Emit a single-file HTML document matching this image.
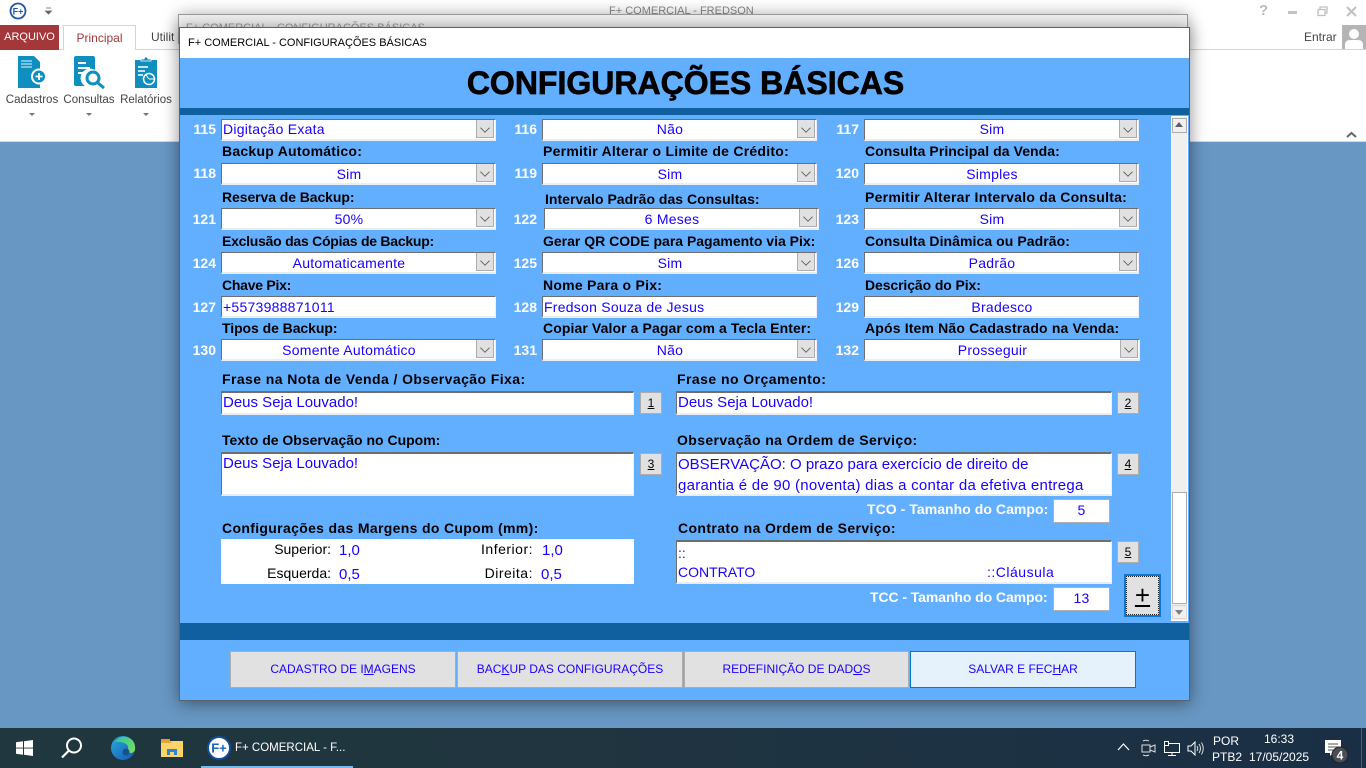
<!DOCTYPE html>
<html lang="pt-BR"><head><meta charset="utf-8"><title>F+ COMERCIAL</title>
<style>
html,body{margin:0;padding:0;width:1366px;height:768px;overflow:hidden;background:#fff;font-family:"Liberation Sans",sans-serif}
div,span,svg{position:absolute;box-sizing:border-box}
u{position:static}
.t{white-space:nowrap;line-height:16px}
.l{font-weight:bold;font-size:14px;letter-spacing:.25px;color:#000}
.w{font-weight:bold;font-size:14px;letter-spacing:.05px;color:#fff}
.h{letter-spacing:.35px}
.n{font-weight:bold;font-size:14px;color:#fff;text-align:right;width:30px;height:16px}
.f{background:#fff;color:#1a00ff;font-size:14px;letter-spacing:.25px;line-height:20px;white-space:nowrap;overflow:hidden;border-top:1px solid #6e6e6e;border-left:1px solid #6e6e6e;border-right:1px solid #eef;border-bottom:2px solid #e8eef5;padding-left:1px}
.c{text-align:center;padding-right:20px}
.i{border:1px solid #b0b0b0;text-align:center;padding:0;line-height:20px}
.big{font-size:15px;letter-spacing:0;border-top:2px solid #6e6e6e}
.a{right:1px;top:-1px;width:18px;height:19px;background:#e1e1e1;border:1px solid #adadad}
.a:after{content:"";position:absolute;left:4px;top:4px;width:7px;height:7px;border-right:1px solid #555;border-bottom:1px solid #555;transform:rotate(45deg) scale(.85)}
.b{background:#e1e1e1;border:1px solid #adadad;color:#1a00ff;font-size:12px;text-align:center;line-height:34px;white-space:nowrap}
.s{background:#e1e1e1;border:1px solid #adadad;color:#000;font-size:12px;text-align:center;line-height:21px;width:22px;height:22px}
.g{font-size:11.5px;color:#444;text-align:center;white-space:nowrap;line-height:16px}
.k{font-size:14px;color:#000;text-align:right;line-height:16px;white-space:nowrap}
.v{font-size:15px;color:#1a00ff;line-height:16px}
</style></head><body>

<!-- background app -->
<div style="left:0;top:0;width:1366px;height:142px;background:#fff;border-bottom:1px solid #d8d8d8"></div>
<div style="left:0;top:142px;width:1366px;height:586px;background:#6897c3"></div>
<div style="left:0;top:49px;width:1366px;height:1px;background:#d4d4d4"></div>
<svg style="left:9px;top:2px" width="18" height="18" viewBox="0 0 18 18"><circle cx="9" cy="9" r="7.500" fill="#fff" stroke="#1d5aa0" stroke-width="1.800"/><text x="9" y="12.500" font-size="9" font-weight="bold" text-anchor="middle" fill="#1d5aa0" font-family="Liberation Sans">F+</text></svg>
<svg style="left:44px;top:6px" width="9" height="10" viewBox="0 0 9 10"><path d="M2 2h5M1.500 5h6l-3 3z" fill="#666" stroke="#666" stroke-width=".8"/></svg>
<div class="t" style="left:0;top:25px;width:59px;height:25px;background:#a4373a;color:#fff;font-size:11px;line-height:25px;text-align:center">ARQUIVO</div>
<div class="t" style="left:63px;top:25px;width:73px;height:25px;background:#fff;border:1px solid #d4d4d4;border-bottom:0;color:#a4373a;font-size:12px;line-height:25px;text-align:center">Principal</div>
<div class="t" style="left:151px;top:29px;font-size:12px;color:#444">Utilit</div>
<div class="t" style="left:609px;top:3px;font-size:11px;color:#888">F+ COMERCIAL - FREDSON</div>

<svg style="left:17px;top:55px" width="30" height="34" viewBox="0 0 30 34"><path d="M1 1h16l6 6v26H1z" fill="#0f8fc0"/><path d="M4 6h11M4 9h11M4 12h11" stroke="#9fd4ea" stroke-width="1.400"/><circle cx="22" cy="21.500" r="8" fill="#fff"/><circle cx="22" cy="21.500" r="6" fill="#0f8fc0"/><path d="M18.500 21.500h7M22 18v7" stroke="#fff" stroke-width="1.800"/></svg>
<svg style="left:73px;top:55px" width="33" height="34" viewBox="0 0 33 34"><path d="M3 1h17q2 0 2 2v12a9 9 0 0 0-10 16H3q-2 0-2-2V3q0-2 2-2z" fill="#0f8fc0"/><path d="M5 8h8M5 13h12M5 18h6" stroke="#fff" stroke-width="2"/><circle cx="20" cy="23" r="6" fill="#fff" stroke="#0f8fc0" stroke-width="3"/><path d="M25 28l6 5" stroke="#0f8fc0" stroke-width="3"/></svg>
<svg style="left:134px;top:56px" width="24" height="33" viewBox="0 0 24 33"><path d="M1 4h22v28H1z" fill="#0f8fc0"/><path d="M7 5V3h3l1-2h2l1 2h3v2z" fill="#0f8fc0" stroke="#fff" stroke-width=".8"/><path d="M4 11h10M4 15h7M4 19h5" stroke="#fff" stroke-width="1.400"/><circle cx="15" cy="23" r="5.500" fill="none" stroke="#fff" stroke-width="1.500"/><path d="M15 23h5.500M15 23l-3-4" stroke="#fff"/></svg>
<div class="g" style="left:3px;top:92px;width:58px">Cadastros</div>
<div class="g" style="left:60px;top:92px;width:58px">Consultas</div>
<div class="g" style="left:117px;top:92px;width:58px">Relatórios</div>
<svg style="left:29px;top:112px" width="120" height="5" viewBox="0 0 120 5"><path d="M0 1h6L3 4zM57 1h6l-3 3zM114 1h6l-3 3z" fill="#777"/></svg>

<!-- right top controls -->
<div class="t" style="left:1259px;top:3px;font-size:15px;font-weight:bold;color:#bbb">?</div>
<div style="left:1288px;top:11px;width:9px;height:3px;background:#c4c4c4"></div>
<svg style="left:1317px;top:6px" width="11" height="11" viewBox="0 0 11 11"><path d="M3 3V1h7v6H8M1 3.500h7v6H1z" fill="none" stroke="#c0c0c0" stroke-width="1.300"/></svg>
<svg style="left:1346px;top:6px" width="11" height="11" viewBox="0 0 11 11"><path d="M1 1l9 9M10 1l-9 9" stroke="#c0c0c0" stroke-width="2"/></svg>
<div class="t" style="left:1304px;top:29px;font-size:12px;color:#444">Entrar</div>
<svg style="left:1342px;top:25px" width="24" height="24" viewBox="0 0 24 24"><rect width="24" height="24" fill="#b5b5b5"/><circle cx="12" cy="9" r="5" fill="#fff"/><path d="M3 24v-4q0-5 5-5h8q5 0 5 5v4z" fill="#fff"/></svg>
<svg style="left:1346px;top:131px" width="11" height="7" viewBox="0 0 11 7"><path d="M1 6l4.500-4L10 6" fill="none" stroke="#666" stroke-width="2"/></svg>

<!-- back dialog -->
<div style="left:178px;top:14px;width:1010px;height:30px;background:#f0f0f0;border:1px solid #9a9a9a;box-shadow:0 0 16px rgba(0,0,0,.3)"></div>
<div class="t" style="left:186px;top:20px;font-size:11px;color:#999">F+ COMERCIAL - CONFIGURAÇÕES BÁSICAS</div>

<!-- dialog -->
<div style="left:179px;top:27px;width:1011px;height:674px;background:#63afff;border:1px solid #59636e;box-shadow:0 2px 16px rgba(0,0,0,.45)"></div>
<div style="left:180px;top:28px;width:1009px;height:30px;background:#fff"></div>
<div class="t" style="left:188px;top:35px;font-size:11px;color:#000">F+ COMERCIAL - CONFIGURAÇÕES BÁSICAS</div>
<div class="t" style="left:180px;top:66px;width:1011px;text-align:center;font-size:32px;line-height:34px;font-weight:bold;color:#000;-webkit-text-stroke:.7px #000">CONFIGURAÇÕES BÁSICAS</div>
<div style="left:180px;top:108px;width:1009px;height:7px;background:#10609f"></div>
<div style="left:180px;top:623px;width:1009px;height:17px;background:#10609f"></div>

<!-- numbers -->
<div class="t n" style="left:186px;top:121px">115</div><div class="t n" style="left:507px;top:121px">116</div><div class="t n" style="left:829px;top:121px">117</div>
<div class="t n" style="left:186px;top:165px">118</div><div class="t n" style="left:507px;top:165px">119</div><div class="t n" style="left:829px;top:165px">120</div>
<div class="t n" style="left:186px;top:211px">121</div><div class="t n" style="left:507px;top:211px">122</div><div class="t n" style="left:829px;top:211px">123</div>
<div class="t n" style="left:186px;top:255px">124</div><div class="t n" style="left:507px;top:255px">125</div><div class="t n" style="left:829px;top:255px">126</div>
<div class="t n" style="left:186px;top:299px">127</div><div class="t n" style="left:507px;top:299px">128</div><div class="t n" style="left:829px;top:299px">129</div>
<div class="t n" style="left:186px;top:342px">130</div><div class="t n" style="left:507px;top:342px">131</div><div class="t n" style="left:829px;top:342px">132</div>

<!-- labels -->
<div class="t l" style="left:222px;top:143px">Backup Automático:</div><div class="t l" style="left:543px;top:143px">Permitir Alterar o Limite de Crédito:</div><div class="t l" style="left:865px;top:143px;letter-spacing:.07px">Consulta Principal da Venda:</div>
<div class="t l" style="left:222px;top:189px;letter-spacing:-.08px">Reserva de Backup:</div><div class="t l" style="left:545px;top:191px;letter-spacing:.02px">Intervalo Padrão das Consultas:</div><div class="t l" style="left:865px;top:189px">Permitir Alterar Intervalo da Consulta:</div>
<div class="t l" style="left:222px;top:233px;letter-spacing:-.25px">Exclusão das Cópias de Backup:</div><div class="t l" style="left:543px;top:233px;letter-spacing:0">Gerar QR CODE para Pagamento via Pix:</div><div class="t l" style="left:865px;top:233px;letter-spacing:.07px">Consulta Dinâmica ou Padrão:</div>
<div class="t l" style="left:222px;top:277px;letter-spacing:-.25px">Chave Pix:</div><div class="t l" style="left:543px;top:277px">Nome Para o Pix:</div><div class="t l" style="left:865px;top:277px;letter-spacing:-.1px">Descrição do Pix:</div>
<div class="t l" style="left:222px;top:320px;letter-spacing:-.06px">Tipos de Backup:</div><div class="t l" style="left:543px;top:320px;letter-spacing:.1px">Copiar Valor a Pagar com a Tecla Enter:</div><div class="t l" style="left:865px;top:320px;letter-spacing:.16px">Após Item Não Cadastrado na Venda:</div>

<!-- selects -->
<div class="f" style="left:221px;top:119px;width:275px;height:22px;line-height:18px">Digitação Exata<div class="a"></div></div>
<div class="f c" style="left:542px;top:119px;width:275px;height:22px;line-height:18px">Não<div class="a"></div></div>
<div class="f c" style="left:864px;top:119px;width:275px;height:22px;line-height:18px">Sim<div class="a"></div></div>
<div class="f c" style="left:221px;top:163px;width:275px;height:22px">Sim<div class="a"></div></div>
<div class="f c" style="left:542px;top:163px;width:275px;height:22px">Sim<div class="a"></div></div>
<div class="f c" style="left:864px;top:163px;width:275px;height:22px">Simples<div class="a"></div></div>
<div class="f c" style="left:221px;top:208px;width:275px;height:22px">50%<div class="a"></div></div>
<div class="f c" style="left:544px;top:208px;width:275px;height:22px">6 Meses<div class="a"></div></div>
<div class="f c" style="left:864px;top:208px;width:275px;height:22px">Sim<div class="a"></div></div>
<div class="f c" style="left:221px;top:252px;width:275px;height:22px">Automaticamente<div class="a"></div></div>
<div class="f c" style="left:542px;top:252px;width:275px;height:22px">Sim<div class="a"></div></div>
<div class="f c" style="left:864px;top:252px;width:275px;height:22px">Padrão<div class="a"></div></div>
<div class="f" style="left:221px;top:296px;width:275px;height:22px">+5573988871011</div>
<div class="f" style="left:542px;top:296px;width:275px;height:22px">Fredson Souza de Jesus</div>
<div class="f" style="left:864px;top:296px;width:275px;height:22px;text-align:center">Bradesco</div>
<div class="f c" style="left:221px;top:339px;width:275px;height:22px">Somente Automático<div class="a"></div></div>
<div class="f c" style="left:542px;top:339px;width:275px;height:22px">Não<div class="a"></div></div>
<div class="f c" style="left:864px;top:339px;width:276px;height:22px">Prosseguir<div class="a"></div></div>

<!-- text blocks -->
<div class="t l" style="left:222px;top:371px;letter-spacing:.42px">Frase na Nota de Venda / Observação Fixa:</div>
<div class="t l" style="left:677px;top:371px;letter-spacing:.45px">Frase no Orçamento:</div>
<div class="f big" style="left:221px;top:391px;width:413px;height:24px;line-height:19px">Deus Seja Louvado!</div>
<div class="f big" style="left:676px;top:391px;width:436px;height:24px;line-height:19px">Deus Seja Louvado!</div>
<div class="s" style="left:640px;top:392px"><u>1</u></div>
<div class="s" style="left:1117px;top:392px"><u>2</u></div>
<div class="t l" style="left:222px;top:432px;letter-spacing:0">Texto de Observação no Cupom:</div>
<div class="t l h" style="left:677px;top:432px;letter-spacing:.38px">Observação na Ordem de Serviço:</div>
<div class="f big" style="left:221px;top:452px;width:413px;height:44px;line-height:20px">Deus Seja Louvado!</div>
<div class="f big" style="left:676px;top:452px;width:436px;height:44px;line-height:21px">OBSERVAÇÃO: O prazo para exercício de direito de<br><span style="position:static;letter-spacing:.26px">garantia é de 90 (noventa) dias a contar da efetiva entrega</span></div>
<div class="s" style="left:640px;top:453px"><u>3</u></div>
<div class="s" style="left:1117px;top:453px"><u>4</u></div>

<div class="t w" style="left:867px;top:501px">TCO - Tamanho do Campo:</div>
<div class="f i" style="left:1053px;top:499px;width:57px;height:24px">5</div>
<div class="t l h" style="left:222px;top:520px;letter-spacing:.33px">Configurações das Margens do Cupom (mm):</div>
<div class="t l h" style="left:678px;top:520px;letter-spacing:.38px">Contrato na Ordem de Serviço:</div>

<div style="left:221px;top:539px;width:413px;height:45px;background:#fff"></div>
<div class="k" style="left:231px;top:541px;width:100px">Superior:</div><div class="v" style="left:339px;top:543px">1,0</div>
<div class="k" style="left:433px;top:541px;width:100px;letter-spacing:.5px">Inferior:</div><div class="v" style="left:542px;top:543px">1,0</div>
<div class="k" style="left:231px;top:565px;width:100px">Esquerda:</div><div class="v" style="left:339px;top:567px">0,5</div>
<div class="k" style="left:433px;top:565px;width:100px;letter-spacing:.5px">Direita:</div><div class="v" style="left:541px;top:567px">0,5</div>

<div class="f" style="left:676px;top:540px;width:436px;height:44px;line-height:19px;padding-top:2px;letter-spacing:0;border-top:2px solid #6e6e6e">::<br>CONTRATO<span style="left:310px;top:21px;letter-spacing:.5px">::Cláusula</span></div>
<div class="s" style="left:1117px;top:541px"><u>5</u></div>
<div class="t w" style="left:870px;top:589px;letter-spacing:-.08px">TCC - Tamanho do Campo:</div>
<div class="f i" style="left:1053px;top:587px;width:57px;height:24px">13</div>

<div style="left:1124px;top:574px;width:37px;height:43px;background:#e1e1e1;border:2px solid #0a78d7;outline:1px dotted #222;outline-offset:-3px;text-align:center;font-size:26px;line-height:39px;color:#000"><u style="text-underline-offset:1px">+</u></div>

<!-- scrollbar -->
<div style="left:1171px;top:116px;width:17px;height:505px;background:#f0f0f0;border:1px solid #fff"></div>
<div style="left:1172px;top:118px;width:15px;height:15px;background:#f0f0f0;border:1px solid #adadad"></div>
<svg style="left:1175px;top:122px" width="9" height="6"><path d="M0 5h8L4 0z" fill="#606060"/></svg>
<div style="left:1172px;top:492px;width:15px;height:112px;background:#fff;border:1px solid #adadad"></div>
<div style="left:1172px;top:605px;width:15px;height:14px;background:#f0f0f0;border:1px solid #d8d8d8"></div>
<svg style="left:1175px;top:610px" width="9" height="6"><path d="M0 0h8L4 5z" fill="#808080"/></svg>

<!-- bottom buttons -->
<div class="b" style="left:230px;top:651px;width:226px;height:37px">CADASTRO DE I<u>M</u>AGENS</div>
<div class="b" style="left:457px;top:651px;width:226px;height:37px">BAC<u>K</u>UP DAS CONFIGURAÇÕES</div>
<div class="b" style="left:684px;top:651px;width:225px;height:37px">REDEFINIÇÃO DE DAD<u>O</u>S</div>
<div class="b" style="left:910px;top:651px;width:226px;height:37px;background:#e5f1fb;border-color:#0078d7">SALVAR E FEC<u>H</u>AR</div>

<!-- taskbar -->
<div style="left:0;top:728px;width:1366px;height:40px;background:linear-gradient(90deg,#20373f 0%,#20353f 40%,#1a2f45 100%)"></div>
<svg style="left:16px;top:740px" width="17" height="16" viewBox="0 0 17 16"><path d="M0 2.300l7-1v6.300H0zM8 1.200L17 0v7.600H8zM0 8.500h7v6.300l-7-1zM8 8.500h9V16l-9-1.200z" fill="#fff"/></svg>
<svg style="left:60px;top:736px" width="24" height="24" viewBox="0 0 24 24"><circle cx="14" cy="9.500" r="7" fill="none" stroke="#fff" stroke-width="2"/><path d="M9 14.500l-7 7" stroke="#fff" stroke-width="2.200"/></svg>
<svg style="left:110px;top:735px" width="26" height="26" viewBox="0 0 26 26"><defs><linearGradient id="e1" x1="0" y1="0" x2="1" y2="1"><stop offset="0" stop-color="#2aa9d8"/><stop offset="1" stop-color="#1457b5"/></linearGradient><linearGradient id="e2" x1="0" y1="0" x2="1" y2="1"><stop offset="0" stop-color="#2fc5a8"/><stop offset="1" stop-color="#7fdc5a"/></linearGradient></defs><circle cx="13" cy="13" r="12" fill="url(#e1)"/><path d="M5 7Q12-2 21 4q5 4 4 11-1 3-5 3-4-1-2-4 1-3-2-5-5-3-11-2z" fill="url(#e2)"/><circle cx="16" cy="17" r="3.500" fill="#1a4f8f"/></svg>
<svg style="left:161px;top:738px" width="22" height="19" viewBox="0 0 22 19"><path d="M0 1h9v4H0z" fill="#e59b2c"/><path d="M0 3h22v16H0z" fill="#fbd568"/><path d="M0 3h9l2 2H0z" fill="#e8a53a"/><path d="M6 17v-6h10v6h-3v-3H9v3z" fill="#2b84d8"/></svg>
<div style="left:201px;top:766px;width:152px;height:2px;background:#76b9ed"></div>
<svg style="left:207px;top:736px" width="24" height="24" viewBox="0 0 24 24"><circle cx="12" cy="12" r="11" fill="#fff" stroke="#0f4fa0" stroke-width="2"/><text x="12" y="16.500" font-size="13" font-weight="bold" text-anchor="middle" fill="#1566b8" font-family="Liberation Sans">F+</text></svg>
<div class="t" style="left:235px;top:740px;font-size:11.500px;color:#fff">F+ COMERCIAL - F...</div>

<!-- tray -->
<svg style="left:1117px;top:742px" width="13" height="9" viewBox="0 0 13 9"><path d="M1 8l5.500-6L12 8" fill="none" stroke="#fff" stroke-width="1.200"/></svg>
<svg style="left:1141px;top:739px" width="15" height="18" viewBox="0 0 15 18"><path d="M1 6h8v7H1zM9 8l5-2v7l-5-2z" fill="none" stroke="#ddd"/><path d="M2 2q3-1.500 6 0M2 16q3 1.500 6 0" fill="none" stroke="#ddd"/></svg>
<svg style="left:1163px;top:741px" width="17" height="15" viewBox="0 0 17 15"><path d="M1.500 2.500h15v9h-15zM9 11.500v3M5 14.500h8" fill="none" stroke="#fff"/><rect x="1.500" y=".5" width="4" height="4" fill="#1a2f45" stroke="#fff"/></svg>
<svg style="left:1187px;top:741px" width="17" height="15" viewBox="0 0 17 15"><path d="M1 5h3l4-4v13l-4-4H1z" fill="none" stroke="#fff"/><path d="M10 5q1.500 2.500 0 5M12 3q3 4.500 0 9M14.500 1.500q3.500 6 0 12" fill="none" stroke="#ddd"/></svg>
<div class="t" style="left:1213px;top:733px;font-size:12px;color:#fff;line-height:16px">POR</div>
<div class="t" style="left:1212px;top:749px;font-size:12px;color:#fff;line-height:16px">PTB2</div>
<div class="t" style="left:1264px;top:731px;font-size:12px;color:#fff">16:33</div>
<div class="t" style="left:1249px;top:749px;font-size:12px;color:#fff">17/05/2025</div>
<svg style="left:1324px;top:739px" width="26" height="26" viewBox="0 0 26 26"><path d="M1 1h16v13H9l-3 3v-3H1z" fill="#fff"/><path d="M4 5h10M4 8h10M4 11h10" stroke="#555"/><circle cx="16" cy="16" r="8" fill="#4a4f55" stroke="#222"/><text x="16" y="20.500" font-size="12" font-weight="bold" fill="#fff" text-anchor="middle" font-family="Liberation Sans">4</text></svg>
<div style="left:1361px;top:728px;width:1px;height:40px;background:#4c5f70"></div>
</body></html>
